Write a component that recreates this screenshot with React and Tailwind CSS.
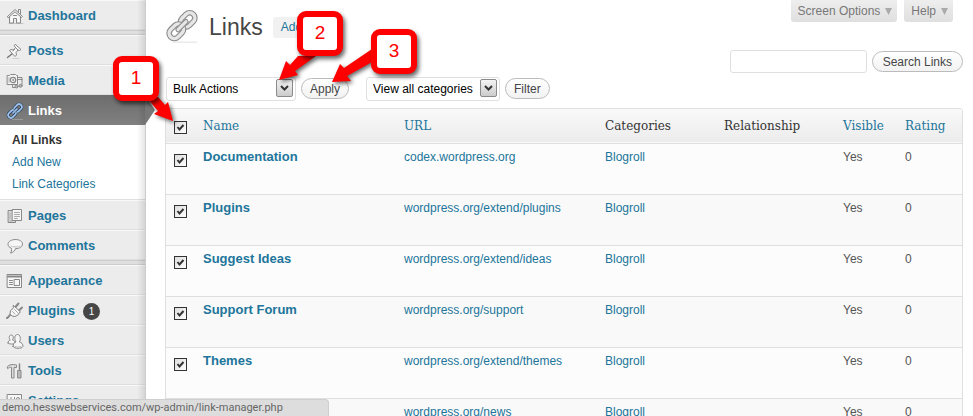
import React, { useState } from 'react';

const Icon = ({ children }) => (
  <svg
    className="w-[18px] h-[18px] shrink-0"
    viewBox="0 0 18 18"
    fill="#f6f6f6"
    stroke="#888888"
    strokeWidth="1"
    strokeLinejoin="round"
    strokeLinecap="round"
    aria-hidden="true"
  >
    {children}
  </svg>
);

const DashboardIcon = () => (
  <Icon>
    <path d="M3 16.500h14" stroke="#c4c4c4" />
    <path d="M12.500 5V2.500h2V7" />
    <path d="M3.500 9v7h4v-4.500h3V16h4V9L9 4z" />
    <path d="M1.500 9.500 9 2.500l7.500 7-1 1L9 4.800 2.500 10.500z" />
    <path d="M7.500 8.500h3" />
  </Icon>
);

const PostsIcon = () => (
  <Icon>
    <path d="M7 16.500h6" stroke="#d0d0d0" />
    <path d="M6.500 11.500 1.500 15.500" stroke="#777777" strokeWidth="1.500" />
    <path d="M9.500 2.500 15 7.500l-1.500 1-1.500-.5-2 2.500.5 2.500-1.500 1.500-5.500-6 1.500-1 2.500.5L9.500 5.500 8.500 4z" />
    <path d="m9.500 5.500 2.500 2.500M7 9l1.500-1.500" fill="none" />
  </Icon>
);

const MediaIcon = () => (
  <Icon>
    <path d="M1.500 3.500h2l1-1h5l1 1h1v9h-10z" />
    <path d="M3 5.500v5" stroke="#b5b5b5" />
    <circle cx="7" cy="8" r="2.700" strokeWidth="1.300" />
    <circle cx="7" cy="8" r="0.500" />
    <path d="M12.500 5.500h3.500v8M12.500 7.500H16M6.500 13.500v2h3" fill="none" />
    <circle cx="10.500" cy="14.500" r="1.500" fill="#bbbbbb" />
    <circle cx="14.500" cy="13.800" r="1.500" fill="#bbbbbb" />
  </Icon>
);

// Two chain links that cross in the middle, drawn flat and then turned
const ChainLinks = ({ outer, inner }) => (
  <g transform="rotate(-45 16 16)" fill="none" strokeLinecap="round">
    <rect x="16" y="10.500" width="17" height="11" rx="5.500" stroke={outer} strokeWidth="6" />
    <rect x="16" y="10.500" width="17" height="11" rx="5.500" stroke={inner} strokeWidth="3.600" />
    <rect x="-1" y="10.500" width="17" height="11" rx="5.500" stroke={outer} strokeWidth="6" />
    <rect x="-1" y="10.500" width="17" height="11" rx="5.500" stroke={inner} strokeWidth="3.600" />
    <path d="M10 16h12" stroke={outer} strokeWidth="5.500" />
    <path d="M10 16h12" stroke={inner} strokeWidth="3.200" />
  </g>
);

const LinksIcon = () => (
  <svg className="w-[18px] h-[18px] shrink-0" viewBox="-2 -2 36 36" aria-hidden="true">
    <path d="M10 33h22" stroke="#999999" strokeWidth="2" />
    <ChainLinks outer="#1d3550" inner="#9dbfe8" />
  </svg>
);

const PagesIcon = () => (
  <Icon>
    <path d="M2.500 3.500h7v12h-7z" fill="#dddddd" />
    <path d="M3.500 14h3M4 6v6" stroke="#aaaaaa" />
    <path d="M6.500 2.500h9v11h-9z" />
    <path d="M8.500 5.500h5M8.500 7.500h5M8.500 9.500h5M8.500 11.500h3" stroke="#aaaaaa" />
  </Icon>
);

const CommentsIcon = () => (
  <Icon>
    <path d="M9.500 2.500c4.200 0 7 2 7 4.600s-2.800 4.500-7 4.500c-.5 2-2.500 4-5 4.500.8-1 1.300-2.800 1-4.800C3.300 10.500 2 9.100 2 7.100c0-2.600 3.300-4.600 7.500-4.600z" />
    <path d="M5 9c2 1.500 7 1.500 9 0" stroke="#cccccc" fill="#d5d5d5" />
  </Icon>
);

const AppearanceIcon = () => (
  <Icon>
    <path d="M1.500 2.500h14v13h-14z" />
    <path d="M2 4.500h13" strokeWidth="2" />
    <path d="M3.500 8.500h3M3.500 10.500h3M3.500 12.500h3" />
    <path d="M8.500 7.500h5v6h-5z" />
  </Icon>
);

const PluginsIcon = () => (
  <Icon>
    <path d="M4.500 12.500C3 13.500 3 15 1 16" fill="none" strokeWidth="2" />
    <path d="m9 5.500 3.500-4M12.500 9 16 5.500" strokeWidth="2" />
    <path d="m7.500 3.500 7 6.500-1.500 1-1 2-3 1.500-3-.5-2-2 .5-3.500L7 6.500z" />
    <path d="M6.500 9.500 9 12M8.500 7.500l3 3" stroke="#aaaaaa" fill="none" />
  </Icon>
);

const UsersIcon = () => (
  <Icon>
    <path d="M2 11c0-1.500 1-2.500 2.200-2.800C2.500 6 3.200 3 5.200 3s2.800 2.800 1.300 5c1.500.3 2.500 1.500 2.500 3-1 1.500-6 1.500-7 0z" />
    <path d="M7 14.500c0-2.500 1.300-4 3-4.500C8 7 8.500 2.500 11.500 2.500S15 7 13.500 10c2 .5 3.500 2 3.500 4.500-1.500 2.500-8.500 2.500-10 0z" />
    <path d="M9 14.500c1.500.8 4.500.8 6 0" stroke="#bbbbbb" fill="none" />
  </Icon>
);

const ToolsIcon = () => (
  <Icon>
    <path d="M1.500 4.500c1.500-2 5-2.500 9-1.500v2.500H8V16H5.500V5.500C4 5 3 5.500 2 6.500z" fill="#dddddd" />
    <path d="M13.500 2v6" strokeWidth="1.500" />
    <path d="M12 8.500h3V16h-3z" fill="#bbbbbb" />
  </Icon>
);

const SettingsIcon = () => (
  <Icon>
    <path d="M1.500 2.500h14v13h-14z" />
    <path d="M5 5.500v8M8.500 5.500v8" />
    <path d="M4 8.500h2" strokeWidth="2" />
    <circle cx="12" cy="7" r="1.500" />
    <path d="M12 11v2" />
  </Icon>
);

const MenuItem = ({ icon, label, badge }) => (
  <li>
    <a
      href="#"
      className="flex items-center h-[30px] pt-0.5 pl-1.5 gap-1 border-t border-t-[#f9f9f9] border-b border-b-[#dfdfdf] text-[13px] font-bold text-[#21759b]"
    >
      {icon}
      {label}
      {badge && (
        <span className="ml-1 flex items-center justify-center w-[17px] h-[17px] rounded-full bg-[#464646] text-white text-[10px] font-normal">
          {badge}
        </span>
      )}
    </a>
  </li>
);

const Separator = () => <li className="h-[5px] border-y border-[#cccccc] bg-[#dfdfdf]" aria-hidden="true" />;

const Sidebar = () => (
  <nav className="relative w-[146px] shrink-0 bg-[#ececec] border-r border-[#cccccc]">
    <ul>
      <MenuItem icon={<DashboardIcon />} label="Dashboard" />
      <Separator />
      <MenuItem icon={<PostsIcon />} label="Posts" />
      <MenuItem icon={<MediaIcon />} label="Media" />
      <li>
        <a
          href="#"
          className="relative flex items-center h-[30px] pt-0.5 pl-1.5 gap-1 bg-linear-to-b from-[#6d6d6d] to-[#808080] text-[13px] font-bold text-white"
        >
          <LinksIcon />
          Links
          <svg className="absolute z-10 left-[145px] top-0 w-[10px] h-[30px]" viewBox="0 0 10 30" aria-hidden="true">
            <path d="M0 0 10 15 0 30z" fill="#777777" />
          </svg>
        </a>
        <ul className="bg-white h-[75px] pt-1 border-b border-[#dfdfdf] pl-3 text-[12px] leading-[22px] text-[#21759b]">
          <li><a href="#" className="font-bold text-[#333333]">All Links</a></li>
          <li><a href="#">Add New</a></li>
          <li><a href="#">Link Categories</a></li>
        </ul>
      </li>
      <MenuItem icon={<PagesIcon />} label="Pages" />
      <MenuItem icon={<CommentsIcon />} label="Comments" />
      <Separator />
      <MenuItem icon={<AppearanceIcon />} label="Appearance" />
      <MenuItem icon={<PluginsIcon />} label="Plugins" badge="1" />
      <MenuItem icon={<UsersIcon />} label="Users" />
      <MenuItem icon={<ToolsIcon />} label="Tools" />
      <MenuItem icon={<SettingsIcon />} label="Settings" />
    </ul>
    <div className="absolute inset-y-0 right-0 w-2 bg-linear-to-r from-transparent to-black/10 pointer-events-none" />
  </nav>
);

const Select = ({ label, options, className }) => (
  <div className={`relative ${className}`}>
    <select
      aria-label={label}
      className="appearance-none w-full h-6 pl-1.5 pr-5 bg-white border border-[#dfdfdf] rounded-[3px] text-[12px] leading-4 text-black"
    >
      {options.map((option) => (
        <option key={option}>{option}</option>
      ))}
    </select>
    <span className="absolute right-[3px] top-[3px] flex items-center justify-center w-[17px] h-[18px] border border-[#8a8a8a] rounded-[2px] bg-linear-to-b from-[#f4f4f4] to-[#cccccc] pointer-events-none">
      <svg className="w-[9px] h-[6px]" viewBox="0 0 9 6" aria-hidden="true">
        <path d="m1 1 3.500 3.500L8 1" fill="none" stroke="#333333" strokeWidth="2" />
      </svg>
    </span>
  </div>
);

const Button = ({ children, className = 'px-2' }) => (
  <button
    type="button"
    className={`h-[21px] border border-[#bbbbbb] rounded-full bg-linear-to-b from-white to-[#f2f2f2] text-[12px] leading-4 text-[#464646] ${className}`}
  >
    {children}
  </button>
);

const Checkbox = ({ label, checked, onChange }) => (
  <span className="relative block w-[13px] h-[13px]">
    <input
      type="checkbox"
      aria-label={label}
      checked={checked}
      onChange={onChange}
      className="peer appearance-none block w-[13px] h-[13px] border border-[#333333] bg-linear-to-br from-[#dddddd] to-white"
    />
    <svg className="hidden peer-checked:block absolute inset-0 w-[13px] h-[13px] pointer-events-none" viewBox="0 0 13 13" aria-hidden="true">
      <path d="m3.500 6 2 2.500 4-4.500" fill="none" stroke="#333333" strokeWidth="2" />
    </svg>
  </span>
);

const links = [
  { name: 'Documentation', url: 'codex.wordpress.org' },
  { name: 'Plugins', url: 'wordpress.org/extend/plugins' },
  { name: 'Suggest Ideas', url: 'wordpress.org/extend/ideas' },
  { name: 'Support Forum', url: 'wordpress.org/support' },
  { name: 'Themes', url: 'wordpress.org/extend/themes' },
  { name: 'WordPress Blog', url: 'wordpress.org/news' },
];

const LinksTable = () => {
  const [selected, setSelected] = useState(links.map((link) => link.name));

  const toggle = (name) => {
    setSelected(selected.includes(name) ? selected.filter((n) => n !== name) : [...selected, name]);
  };

  const toggleAll = () => {
    setSelected(selected.length === links.length ? [] : links.map((link) => link.name));
  };

  return (
    <div className="border border-[#dfdfdf] rounded-[3px] overflow-hidden">
      <table className="w-full table-fixed border-collapse text-left text-[12px] leading-[18px] text-[#555555]">
        <thead>
          <tr className="h-[34px] bg-linear-to-b from-[#f9f9f9] to-[#ececec] border-b border-[#dfdfdf] font-['DejaVu_Serif',serif] text-[#21759b]">
            <th className="w-[30px] pl-2 pt-1">
              <Checkbox label="Select all" checked={selected.length === links.length} onChange={toggleAll} />
            </th>
            <th className="w-[201px] pl-[7px] font-normal"><a href="#">Name</a></th>
            <th className="w-[201px] pl-[7px] font-normal"><a href="#">URL</a></th>
            <th className="w-[119px] pl-[7px] font-normal text-[#333333]">Categories</th>
            <th className="pl-[7px] font-normal text-[#333333]">Relationship</th>
            <th className="w-[62px] pl-[7px] font-normal"><a href="#">Visible</a></th>
            <th className="w-[64px] pl-[7px] font-normal"><a href="#">Rating</a></th>
          </tr>
        </thead>
        <tbody>
          {links.map((link) => (
            <tr key={link.name} className="h-[51px] align-top bg-[#fcfcfc] even:bg-[#f9f9f9] border-b border-[#dfdfdf]">
              <td className="pl-2 pt-2.5">
                <Checkbox label={`Select ${link.name}`} checked={selected.includes(link.name)} onChange={() => toggle(link.name)} />
              </td>
              <td className="pl-[7px] pt-1 text-[13px] font-bold text-[#21759b]"><a href="#">{link.name}</a></td>
              <td className="pl-[7px] pt-1 text-[#21759b]"><a href="#">{link.url}</a></td>
              <td className="pl-[7px] pt-1 text-[#21759b]"><a href="#">Blogroll</a></td>
              <td className="pl-[7px] pt-1" />
              <td className="pl-[7px] pt-1">Yes</td>
              <td className="pl-[7px] pt-1">0</td>
            </tr>
          ))}
        </tbody>
      </table>
    </div>
  );
};

const MetaTab = ({ children }) => (
  <button
    type="button"
    className="flex items-center gap-[5px] h-[22px] pl-[7px] pr-[5px] rounded-b-[3px] bg-linear-to-b from-[#eeeeee] to-[#dfdfdf] text-[12px] text-[#777777]"
  >
    {children}
    <svg className="w-[7px] h-[7px]" viewBox="0 0 7 7" aria-hidden="true">
      <path d="M0 0h7L3.500 7z" fill="#aaaaaa" />
    </svg>
  </button>
);

const Callout = ({ number, className }) => (
  <div
    className={`absolute flex items-center justify-center w-[46px] h-[45px] border-[6px] border-[#ff0000] rounded-[9px] bg-white text-[19px] text-[#ff0000] shadow-[2px_3px_4px_rgba(0,0,0,0.6)] ${className}`}
  >
    {number}
  </div>
);

// Numbered steps drawn over the page, with arrows to the controls they explain
const Annotations = () => (
  <div className="absolute inset-0 z-20 pointer-events-none">
    <svg className="absolute left-0 top-0 w-[440px] h-[140px] drop-shadow-[2px_2px_2px_rgba(0,0,0,0.6)]" viewBox="0 0 440 140" aria-hidden="true">
      <g fill="#ff0000">
        <path d="M146 97 158 97 165 105 168 102 173 121 154 114 158 111z" />
        <path d="M298 56h18L295 71l3 4-19 5 7-19 4 4z" />
        <path d="M372 49v13l-25 14 4 5-19 1 8-18 4 4z" />
      </g>
    </svg>
    <Callout number="1" className="left-[113px] top-[56px]" />
    <Callout number="2" className="left-[297px] top-[11px]" />
    <Callout number="3" className="left-[371px] top-[29px]" />
  </div>
);

export default function App() {
  return (
    <div className="relative flex h-screen overflow-hidden bg-white font-['Liberation_Sans',Arial,sans-serif]">
      <Sidebar />

      <main className="flex-1 min-w-0 pl-[19px] pr-2.5">
        <header className="flex items-start justify-between h-[50px]">
          <div className="flex items-center pt-[9px]">
            <svg className="w-[34px] h-[36px] mr-2.5" viewBox="-2 -1 36 37" aria-hidden="true">
              <path d="M6 33.500h26" stroke="#dddddd" />
              <ChainLinks outer="#8c8c8c" inner="#e6e6e6" />
            </svg>
            <h1 className="text-[23px] leading-9 text-[#464646]">Links</h1>
            <a href="#" className="ml-2.5 px-2 h-[21px] leading-[21px] rounded-[3px] bg-[#f1f1f1] text-[12px] text-[#21759b]">
              Add New
            </a>
          </div>
          <div className="flex gap-[7px] mr-2.5">
            <MetaTab>Screen Options</MetaTab>
            <MetaTab>Help</MetaTab>
          </div>
        </header>

        <form className="flex items-center justify-end gap-[5px]" onSubmit={(e) => e.preventDefault()}>
          <input type="text" aria-label="Search Links" className="w-[137px] h-[23px] px-1 border border-[#dfdfdf] rounded-[3px] bg-white text-[12px]" />
          <Button className="px-2.5">Search Links</Button>
        </form>

        <div className="flex items-center gap-[5px] mt-[3px] mb-[7px] pl-px">
          <Select label="Bulk Actions" options={['Bulk Actions', 'Delete']} className="w-[130px]" />
          <Button>Apply</Button>
          <Select label="Category" options={['View all categories', 'Blogroll']} className="w-[134px] ml-3" />
          <Button>Filter</Button>
        </div>

        <LinksTable />
      </main>

      <div className="absolute left-0 bottom-0 z-30 w-[329px] h-[17px] pl-0.5 rounded-tr-[4px] border-t border-r border-[#cfcfcf] bg-[#dddddd] font-[Roboto,sans-serif] text-[11px] leading-4 text-[#666666] whitespace-nowrap">
        demo.hesswebservices.com/wp-admin/link-manager.php
      </div>

      <Annotations />
    </div>
  );
}
